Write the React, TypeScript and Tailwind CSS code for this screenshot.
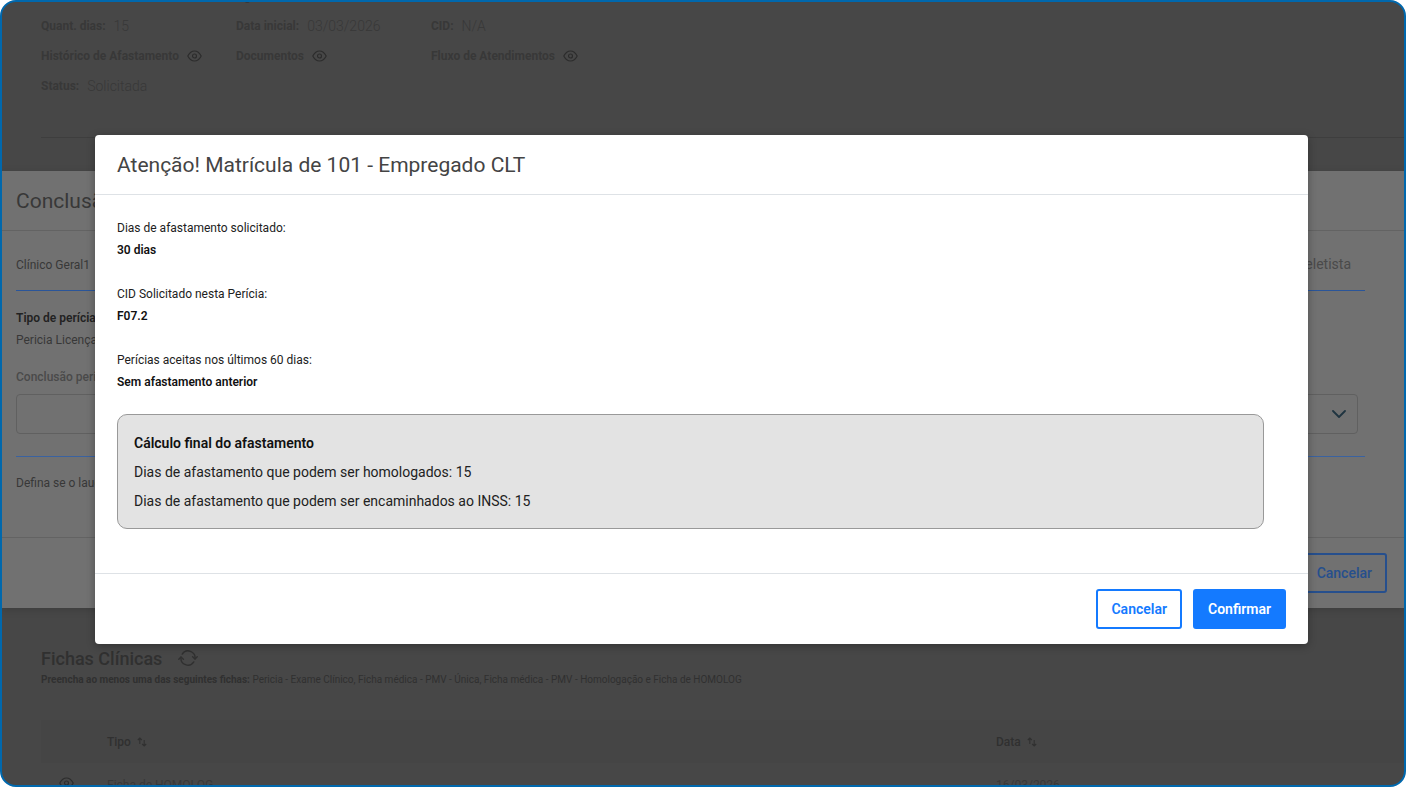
import { ReactNode } from 'react';

const FICHAS =
  'Pericia - Exame Clínico, Ficha médica - PMV - Única, Ficha médica - PMV - Homologação e Ficha de HOMOLOG';

const RESUMO = [
  { label: 'Dias de afastamento solicitado:', value: '30 dias' },
  { label: 'CID Solicitado nesta Perícia:', value: 'F07.2' },
  { label: 'Perícias aceitas nos últimos 60 dias:', value: 'Sem afastamento anterior' },
];

function EyeIcon() {
  return (
    <svg width="15" height="12" viewBox="0 0 15 12" fill="none" stroke="currentColor" strokeWidth="1.2">
      <path d="M.8 6C2.6 2.6 4.9 1 7.5 1s4.9 1.6 6.7 5c-1.8 3.4-4.1 5-6.7 5S2.6 9.4.8 6Z" strokeLinejoin="round" />
      <circle cx="7.5" cy="6" r="2" />
    </svg>
  );
}

function SyncIcon() {
  return (
    <svg
      width="20"
      height="16"
      viewBox="0 0 20 16"
      fill="none"
      stroke="currentColor"
      strokeWidth="1.4"
      strokeLinecap="round"
      strokeLinejoin="round"
    >
      <path d="M4.2 4.1A7 7 0 0 1 17 8.8" />
      <path d="M15.8 11.9A7 7 0 0 1 3 7.2" />
      <path d="M.8 9.2 3 7l2.4 2.2" />
      <path d="M14.6 6.8 17 9l2.2-2.2" />
    </svg>
  );
}

function SortIcon() {
  return (
    <svg width="10" height="10" viewBox="0 0 10 10" fill="none" stroke="currentColor" strokeWidth="1.1">
      <path d="M2.8 7V1M.8 3l2-2 2 2M7.2 3v6M5.2 7l2 2 2-2" />
    </svg>
  );
}

function Field({ label, children }: { label: string; children?: ReactNode }) {
  return (
    <div className="flex items-center gap-2">
      <span className="text-[12px] font-bold">{label}</span>
      {children}
    </div>
  );
}

function EyeButton({ label }: { label: string }) {
  return (
    <button type="button" aria-label={label} className="text-[#2c2c2c]">
      <EyeIcon />
    </button>
  );
}

function SortHeader({ label }: { label: string }) {
  return (
    <th className="p-0 text-left font-medium">
      <button type="button" className="flex items-center gap-1.5">
        {label}
        <SortIcon />
      </button>
    </th>
  );
}

function PericiaPage() {
  return (
    <main className="-mt-[21px] pl-[39px] text-[#383838]">
      <section className="grid auto-rows-[30px] grid-cols-[195px_195px_1fr] text-[14px] font-light">
        <div />
        <Field label="Agenda" />
        <div />
        <Field label="Quant. dias:">15</Field>
        <Field label="Data inicial:">03/03/2026</Field>
        <Field label="CID:">N/A</Field>
        <Field label="Histórico de Afastamento">
          <EyeButton label="Ver histórico" />
        </Field>
        <Field label="Documentos">
          <EyeButton label="Ver documentos" />
        </Field>
        <Field label="Fluxo de Atendimentos">
          <EyeButton label="Ver fluxo" />
        </Field>
        <Field label="Status:">Solicitada</Field>
      </section>

      <section className="mt-9 min-h-[507px] border-t border-[#3e3e3e]" />

      <section className="text-[#303030]">
        <div className="flex h-7 items-center gap-4">
          <h2 className="text-[18px] font-medium">Fichas Clínicas</h2>
          <button type="button" aria-label="Atualizar fichas">
            <SyncIcon />
          </button>
        </div>
        <p className="text-[10px] leading-4">
          <b className="font-bold">Preencha ao menos uma das seguintes fichas:</b> {FICHAS}
        </p>
        <table className="mt-8 w-full table-fixed text-[12px]">
          <colgroup>
            <col className="w-[66px]" />
            <col className="w-[889px]" />
            <col />
          </colgroup>
          <thead>
            <tr className="h-[43px] bg-[#454545]">
              <th />
              <SortHeader label="Tipo" />
              <SortHeader label="Data" />
            </tr>
          </thead>
          <tbody>
            <tr className="h-[43px] text-[#383838]">
              <td className="pl-[18px]">
                <EyeButton label="Ver ficha" />
              </td>
              <td>Ficha de HOMOLOG</td>
              <td>16/03/2026</td>
            </tr>
          </tbody>
        </table>
      </section>
    </main>
  );
}

function ConclusaoDialog() {
  return (
    <section className="flex w-full flex-col bg-[#717171] text-[12px] text-[#383838] shadow-[0_2px_8px_rgba(0,0,0,0.15)]">
      <header className="flex h-[60px] items-center border-b border-[#636363] px-3.5 pt-0.5">
        <h2 className="text-[21px]">Conclusão</h2>
      </header>
      <div className="pr-[39px] pl-3.5">
        <div className="flex h-[60px] items-center justify-between border-b border-[#2a5599] pt-2">
          <span>Clínico Geral1</span>
          <span className="pr-3.5 text-[14px] text-[#4a4a4a]">Esqueletista</span>
        </div>
        <div className="pt-4 leading-[22px]">
          <p className="font-semibold text-[#222222]">Tipo de perícia</p>
          <p>Pericia Licença</p>
        </div>
        <div className="flex flex-col pt-[15px] pr-[7px] pb-[22px]">
          <label htmlFor="conclusao" className="leading-[22px] font-medium text-[#4a4a4a]">
            Conclusão perícia
          </label>
          <div className="relative mt-1.5">
            <select id="conclusao" className="h-10 w-full appearance-none rounded border border-[#606060] px-3">
              <option />
            </select>
            <svg
              className="pointer-events-none absolute top-3.5 right-3"
              width="14"
              height="12"
              viewBox="0 0 14 12"
              fill="none"
              stroke="#1f3440"
              strokeWidth="1.8"
              strokeLinecap="round"
              strokeLinejoin="round"
            >
              <path d="M1 3l6 6 6-6" />
            </svg>
          </div>
        </div>
        <p className="h-[81px] border-t border-[#3a62a0] pt-[15px] leading-[22px]">Defina se o laudo</p>
      </div>
      <footer className="flex h-[71px] items-center justify-end border-t border-[#636363] px-[17px]">
        <button
          type="button"
          className="h-10 rounded-[3px] border-2 border-[#264f8d] px-[13px] text-[14px] font-medium text-[#264f8d]"
        >
          Cancelar
        </button>
      </footer>
    </section>
  );
}

function AtencaoDialog() {
  return (
    <section
      role="dialog"
      aria-labelledby="atencao-titulo"
      className="flex w-full flex-col rounded bg-white text-[12px] text-[#212121] shadow-[0_2px_8px_rgba(0,0,0,0.3)]"
    >
      <header className="flex h-[60px] items-center border-b border-[#dee2e6] px-[22px] pt-0.5">
        <h1 id="atencao-titulo" className="text-[21px] text-[#444444]">
          Atenção! Matrícula de 101 - Empregado CLT
        </h1>
      </header>
      <div className="pt-[22px] pr-11 pb-11 pl-[22px]">
        <dl className="flex flex-col gap-[22px] leading-[22px]">
          {RESUMO.map((item) => (
            <div key={item.label}>
              <dt>{item.label}</dt>
              <dd className="font-semibold text-[#111111]">{item.value}</dd>
            </div>
          ))}
        </dl>
        <div className="mt-[21px] flex flex-col gap-[7px] rounded-[10px] border border-[#999999] bg-[#e3e3e3] px-4 pt-[17px] pb-4 text-[14px] leading-[22px]">
          <p className="font-semibold text-[#111111]">Cálculo final do afastamento</p>
          <p>Dias de afastamento que podem ser homologados: 15</p>
          <p>Dias de afastamento que podem ser encaminhados ao INSS: 15</p>
        </div>
      </div>
      <footer className="flex h-[71px] items-center justify-end gap-[11px] border-t border-[#dee2e6] px-[22px] text-[14px] font-semibold">
        <button type="button" className="h-10 rounded-[3px] border-2 border-[#147aff] px-[13px] text-[#147aff]">
          Cancelar
        </button>
        <button type="button" className="h-10 rounded-[3px] border-2 border-[#147aff] bg-[#147aff] px-[13px] text-white">
          Confirmar
        </button>
      </footer>
    </section>
  );
}

export default function App() {
  return (
    <div className="relative h-screen overflow-hidden rounded-2xl border-2 border-[#0068ad] bg-[#474747] font-['Roboto',sans-serif]">
      <PericiaPage />
      <div className="absolute inset-0 flex items-center pb-2">
        <ConclusaoDialog />
      </div>
      <div className="absolute inset-0 flex items-center pr-24 pb-2 pl-[93px]">
        <AtencaoDialog />
      </div>
    </div>
  );
}
